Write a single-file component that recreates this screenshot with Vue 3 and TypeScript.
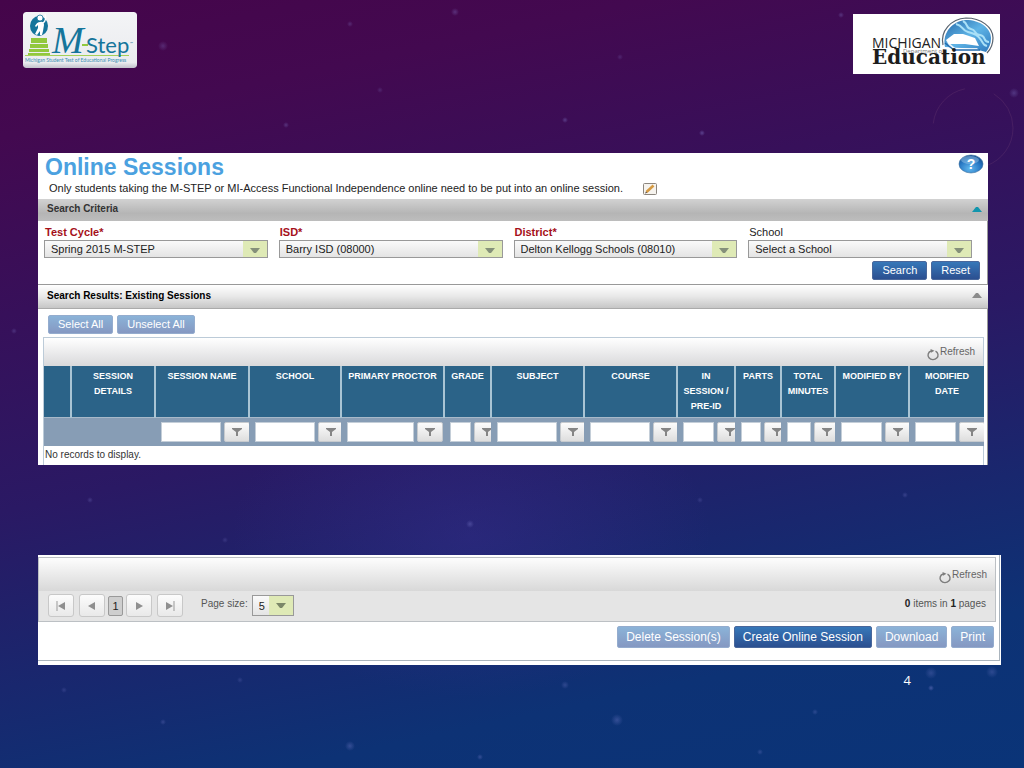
<script setup lang="ts">
import { ref } from 'vue'

interface Criterion {
  id: string
  label: string
  value: string
  required: boolean
}
interface Column {
  title: string
  width: number
  filter: number
}

const criteria: Criterion[] = [
  { id: 'cycle', label: 'Test Cycle', value: 'Spring 2015 M-STEP', required: true },
  { id: 'isd', label: 'ISD', value: 'Barry ISD (08000)', required: true },
  { id: 'district', label: 'District', value: 'Delton Kellogg Schools (08010)', required: true },
  { id: 'school', label: 'School', value: 'Select a School', required: false },
]

const columns: Column[] = [
  { title: '', width: 27, filter: 0 },
  { title: 'SESSION DETAILS', width: 84, filter: 0 },
  { title: 'SESSION NAME', width: 94, filter: 60 },
  { title: 'SCHOOL', width: 92, filter: 60 },
  { title: 'PRIMARY PROCTOR', width: 103, filter: 67 },
  { title: 'GRADE', width: 47, filter: 21 },
  { title: 'SUBJECT', width: 93, filter: 60 },
  { title: 'COURSE', width: 93, filter: 60 },
  { title: 'IN SESSION / PRE-ID', width: 58, filter: 31 },
  { title: 'PARTS', width: 46, filter: 20 },
  { title: 'TOTAL MINUTES', width: 54, filter: 24 },
  { title: 'MODIFIED BY', width: 74, filter: 41 },
  { title: 'MODIFIED DATE', width: 75, filter: 41 },
]

const pageSize = ref('5')

const stars = [
  [455, 12, 4, 0.3], [350, 24, 3, 0.25], [163, 46, 5, 0.25], [565, 120, 3, 0.35],
  [702, 133, 3, 0.4], [286, 125, 3, 0.3], [841, 15, 3, 0.3], [1014, 93, 5, 0.3],
  [380, 90, 3, 0.2], [620, 57, 3, 0.2], [90, 500, 3, 0.25], [470, 524, 4, 0.3],
  [700, 500, 3, 0.2], [905, 495, 3, 0.25], [225, 540, 3, 0.2], [14, 331, 3, 0.25],
  [931, 673, 6, 0.25], [931, 688, 3, 0.4], [992, 672, 6, 0.25], [617, 720, 6, 0.3],
  [565, 685, 4, 0.25], [350, 746, 5, 0.3], [163, 722, 3, 0.25], [815, 712, 3, 0.25],
  [64, 690, 3, 0.2], [480, 757, 3, 0.3], [760, 752, 3, 0.25], [240, 680, 3, 0.2],
]
</script>

<template>
  <main class="slide">
    <svg class="sky" viewBox="0 0 1024 768" preserveAspectRatio="xMidYMid slice" aria-hidden="true">
      <defs>
        <radialGradient id="star">
          <stop offset="0" stop-color="#8f8fe0" />
          <stop offset="1" stop-color="#8f8fe0" stop-opacity="0" />
        </radialGradient>
      </defs>
      <circle v-for="(s, i) in stars" :key="i" :cx="s[0]" :cy="s[1]" :r="s[2]" fill="url(#star)" :opacity="s[3]" />
      <circle cx="973" cy="128" r="40" fill="none" stroke="#a06a8a" stroke-opacity=".16" stroke-dasharray="50 30 90 81" stroke-dashoffset="-130" />
    </svg>

    <header class="logos">
      <svg class="mstep" viewBox="0 0 114 56" role="img" aria-label="M-Step">
        <defs>
          <linearGradient id="plate" x1="0" y1="0" x2="0" y2="1">
            <stop offset="0" stop-color="#f3f4f6" />
            <stop offset=".9" stop-color="#ebecef" />
            <stop offset="1" stop-color="#c2c2cc" />
          </linearGradient>
        </defs>
        <rect width="114" height="56" rx="3" fill="url(#plate)" />
        <ellipse cx="16" cy="14" rx="9" ry="10" fill="#15759b" />
        <circle cx="17" cy="6" r="3" fill="#fff" stroke="#15759b" stroke-width=".8" />
        <path d="M12 14q2-4 5-4 4-1 4 3l-1 6-1 4h-2v-4l-3 4-2-1 3-6v-3l-2 2z" fill="#fff" />
        <path d="M20 11q4-3 2-9" fill="none" stroke="#fff" stroke-width="1.400" />
        <path d="M8 26h16v5H8zM7 32h18v4H7zM6 37h20v3H6zM5 41h22v2H5z" fill="#92c83e" />
        <path d="M2 43.500h104" stroke="#a5d058" />
        <path d="M59 33h6" stroke="#92c83e" stroke-width="2" />
        <text x="29" y="41" class="mstep-m">M</text>
        <text x="63" y="41" class="mstep-step">Step</text>
        <text x="107" y="33" class="mstep-tm">™</text>
        <text x="2" y="50" class="mstep-caption">Michigan Student Test of Educational Progress</text>
      </svg>

      <svg class="mde" viewBox="0 0 147 60" role="img" aria-label="Michigan Department of Education">
        <defs>
          <linearGradient id="water" x1="0" y1="0" x2="1" y2="1">
            <stop offset="0" stop-color="#2567a8" />
            <stop offset=".5" stop-color="#5fb4e6" />
            <stop offset="1" stop-color="#2d79bd" />
          </linearGradient>
        </defs>
        <rect width="147" height="60" fill="#fff" />
        <path d="M90 31C87 17 98 5 113 4c15 0 27 9 27 20 0 6-2 11-6 15" fill="none" stroke="#59636e" stroke-width="1.200" />
        <path d="M92 33C89 18 100 7 113 6c14 0 25 8 25 18 0 6-2 10-5 14-12-4-26-4-41-5z" fill="url(#water)" />
        <path d="M110 7c6 3 2 7 8 8s2 5 9 6 2 7 9 7M103 10c8 2 5 6 12 8s10 3 13 8 3 5 6 6" fill="none" stroke="#a9e0f7" stroke-width="2" />
        <path d="M93 26l8-6 9 0 12 4 4 8-14-2-16 0z" fill="#fff" />
        <path d="M93 26l9 8h22l3 3H99z" fill="#fff" opacity=".85" />
        <path d="M92 29l9 7h26" fill="none" stroke="#236bad" stroke-width="1.500" />
        <text x="19" y="34" class="mde-state">MICHIGAN</text>
        <text x="50" y="39" class="mde-dept">Department of</text>
        <text x="19" y="50" class="mde-name">Education</text>
      </svg>
    </header>

    <section class="panel sessions">
      <div class="heading">
        <h1>Online Sessions</h1>
        <button class="help" type="button" aria-label="Help">
          <svg viewBox="0 0 26 20" width="26" height="20">
            <defs>
              <radialGradient id="ball" cx=".45" cy=".75" r=".75">
                <stop offset="0" stop-color="#62b8ee" />
                <stop offset=".6" stop-color="#2878c4" />
                <stop offset="1" stop-color="#124d8e" />
              </radialGradient>
            </defs>
            <ellipse cx="13" cy="10" rx="12" ry="9" fill="url(#ball)" stroke="#3a6f9d" stroke-width=".6" />
            <ellipse cx="12" cy="6" rx="9" ry="4" fill="#b4dcf6" opacity=".4" />
            <text x="13" y="15" text-anchor="middle" class="help-mark">?</text>
          </svg>
        </button>
      </div>
      <p class="intro">
        <span>Only students taking the M-STEP or MI-Access Functional Independence online need to be put into an online session.</span>
        <button class="edit" type="button" aria-label="Edit">
          <svg viewBox="0 0 14 12" width="14" height="12">
            <rect x=".5" y=".5" width="13" height="11" rx="1" fill="#f6f3ee" stroke="#8c867f" />
            <path d="M3.500 9L10.500 2.500" stroke="#d59a43" stroke-width="2.600" />
            <path d="M2 10.500l1-2 1.200 1.200z" fill="#4d4035" />
          </svg>
        </button>
      </p>

      <h2 class="bar dark">
        Search Criteria
        <svg viewBox="0 0 10 5" width="10" height="5"><path d="M0 5L4 0h2l4 5z" fill="#1195ad" /></svg>
      </h2>

      <form class="criteria" @submit.prevent>
        <div class="fields">
          <div v-for="c in criteria" :key="c.id" class="field">
            <label :for="c.id" :class="{ required: c.required }">{{ c.label }}<template v-if="c.required">*</template></label>
            <span class="combo">
              <select :id="c.id"><option>{{ c.value }}</option></select>
              <svg viewBox="0 0 10 5" width="10" height="5"><path d="M0 0h10L6 5H4z" fill="#85907a" /></svg>
            </span>
          </div>
        </div>
        <div class="actions">
          <button class="btn" type="submit">Search</button>
          <button class="btn" type="reset">Reset</button>
        </div>
      </form>

      <h2 class="bar light">
        Search Results: Existing Sessions
        <svg viewBox="0 0 10 5" width="10" height="5"><path d="M0 5L4 0h2l4 5z" fill="#8b8b8b" /></svg>
      </h2>

      <div class="results">
        <div class="selection">
          <button class="btn muted" type="button">Select All</button>
          <button class="btn muted" type="button">Unselect All</button>
        </div>
        <div class="grid">
          <div class="toolbar">
            <button class="refresh" type="button">
              <svg viewBox="0 0 14 13" width="14" height="13">
                <path d="M9.500 3.200A5 4.500 0 1 1 5 3" fill="none" stroke="#7d7d7d" stroke-width="1.400" />
                <path d="M4.500 1l4 1.800-3.500 2z" fill="#7d7d7d" />
              </svg>
              <span>Refresh</span>
            </button>
          </div>
          <table>
            <colgroup>
              <col v-for="(c, i) in columns" :key="i" :style="{ width: c.width + 'px' }" />
            </colgroup>
            <thead>
              <tr class="titles">
                <th v-for="(c, i) in columns" :key="i" scope="col">{{ c.title }}</th>
              </tr>
              <tr class="filters">
                <td v-for="(c, i) in columns" :key="i">
                  <div v-if="c.filter" class="filter">
                    <input type="text" :aria-label="'Filter ' + c.title" :style="{ width: c.filter + 'px' }" />
                    <button type="button" :aria-label="'Filter options ' + c.title">
                      <svg viewBox="0 0 10 8" width="10" height="8"><path d="M0 0h10v1L6 4v4H4V4L0 1z" fill="#858585" /></svg>
                    </button>
                  </div>
                </td>
              </tr>
            </thead>
            <tbody>
              <tr>
                <td class="empty" :colspan="columns.length">No records to display.</td>
              </tr>
            </tbody>
          </table>
        </div>
      </div>
    </section>

    <section class="panel footer">
      <div class="frame">
        <div class="pager-box">
          <div class="toolbar tall">
            <button class="refresh" type="button">
              <svg viewBox="0 0 14 13" width="14" height="13">
                <path d="M9.500 3.200A5 4.500 0 1 1 5 3" fill="none" stroke="#7d7d7d" stroke-width="1.400" />
                <path d="M4.500 1l4 1.800-3.500 2z" fill="#7d7d7d" />
              </svg>
              <span>Refresh</span>
            </button>
          </div>
          <nav class="pager" aria-label="Pages">
            <button class="step" type="button" aria-label="First page">
              <svg viewBox="0 0 10 10" width="10" height="10"><path d="M1 0v10" stroke="#999" /><path d="M9 1v8L2 5z" fill="#8f8f8f" /></svg>
            </button>
            <button class="step" type="button" aria-label="Previous page">
              <svg viewBox="0 0 10 10" width="10" height="10"><path d="M8 1v8L1 5z" fill="#8f8f8f" /></svg>
            </button>
            <button class="current" type="button">1</button>
            <button class="step" type="button" aria-label="Next page">
              <svg viewBox="0 0 10 10" width="10" height="10"><path d="M2 1v8l7-4z" fill="#8f8f8f" /></svg>
            </button>
            <button class="step" type="button" aria-label="Last page">
              <svg viewBox="0 0 10 10" width="10" height="10"><path d="M9 0v10" stroke="#999" /><path d="M1 1v8l7-4z" fill="#8f8f8f" /></svg>
            </button>
            <label for="page-size">Page size:</label>
            <span class="combo size">
              <select id="page-size" v-model="pageSize"><option>5</option><option>10</option></select>
              <svg viewBox="0 0 10 5" width="10" height="5"><path d="M0 0h10L6 5H4z" fill="#7b8768" /></svg>
            </span>
            <span class="count"><b>0</b> items in <b>1</b> pages</span>
          </nav>
        </div>
        <div class="commands">
          <button class="btn big muted" type="button">Delete Session(s)</button>
          <button class="btn big" type="button">Create Online Session</button>
          <button class="btn big muted" type="button">Download</button>
          <button class="btn big muted" type="button">Print</button>
        </div>
      </div>
    </section>

    <footer class="number">4</footer>
  </main>
</template>

<style>
html,
body {
  margin: 0;
  background: #0b3377;
}
</style>

<style scoped>
.slide {
  position: relative;
  box-sizing: border-box;
  min-height: 100vh;
  overflow: hidden;
  font-family: "Liberation Sans", Arial, sans-serif;
  background:
    radial-gradient(ellipse 240px 160px at 46% 70%, rgba(62, 48, 150, 0.35), transparent),
    linear-gradient(168deg, #45054a 0%, #430950 14%, #37105a 32%, #2a1964 52%, #19276e 70%, #0d3275 84%, #0a3478 100%);
}
.slide * {
  box-sizing: border-box;
}
.sky {
  position: absolute;
  inset: 0;
  width: 100%;
  height: 100%;
}
.logos,
.panel,
.number {
  position: relative;
}
.logos {
  display: flex;
  justify-content: space-between;
  align-items: flex-start;
  height: 153px;
  padding: 12px 24px 0 23px;
}
.mstep {
  width: 114px;
  height: 56px;
  border-radius: 3px;
}
.mde {
  width: 147px;
  height: 60px;
  margin-top: 2px;
}
.mstep-m {
  font: italic 38px "Liberation Serif", serif;
  fill: #15759b;
}
.mstep-step {
  font: 22px Lato, sans-serif;
  fill: #15759b;
}
.mstep-tm {
  font: 4px Lato, sans-serif;
  fill: #15759b;
}
.mstep-caption {
  font: 5px Lato, sans-serif;
  fill: #3a8db2;
}
.mde-state {
  font: 14px "Open Sans", sans-serif;
  fill: #222;
}
.mde-dept {
  font: 6px "Open Sans", sans-serif;
  fill: #777;
}
.mde-name {
  font: bold 20px "DejaVu Serif", serif;
  fill: #1d1d1d;
}
.panel {
  background: #fff;
  overflow: hidden;
}
.sessions {
  margin: 0 36px 0 38px;
}
button {
  font-family: inherit;
  cursor: pointer;
}
.heading {
  display: flex;
  justify-content: space-between;
  height: 27px;
  padding: 1px 4px 0 7px;
}
h1 {
  margin: 0;
  font-size: 23px;
  line-height: 27px;
  color: #4ba1e0;
}
.help,
.edit {
  display: flex;
  padding: 0;
  border: 0;
  background: none;
}
.help-mark {
  font: bold 14px "Liberation Sans", sans-serif;
  fill: #fff;
}
.intro {
  display: flex;
  align-items: center;
  gap: 20px;
  height: 19px;
  margin: 0;
  padding: 0 11px 3px;
  font-size: 11px;
  white-space: nowrap;
  color: #222;
}
.edit {
  margin-top: 2px;
}
.bar {
  display: flex;
  justify-content: space-between;
  align-items: center;
  margin: 0;
  padding: 0 6px 2px 9px;
  font-size: 10px;
  line-height: 12px;
}
.dark {
  height: 22px;
  color: #333;
  background: linear-gradient(#d2d2d2, #b5b5b5 65%, #bdbdbd);
}
.light {
  height: 24px;
  color: #000;
  background: linear-gradient(#fff, #e8e8e8 50%, #c6c6c6);
  border-bottom: 1px solid #aaa;
}
.criteria {
  height: 64px;
  padding: 4px 0 0 6px;
  border-right: 1px solid #999;
  border-bottom: 1px solid #999;
}
.fields {
  display: grid;
  grid-template-columns: repeat(4, 1fr);
  gap: 11px;
  padding-right: 15px;
}
.field {
  display: flex;
  flex-direction: column;
}
.field label {
  padding: 0 0 1px 1px;
  font-size: 11px;
  line-height: 14px;
  color: #222;
}
.field .required {
  font-weight: bold;
  color: #a5101a;
}
.combo {
  position: relative;
  display: flex;
}
.combo select {
  appearance: none;
  width: 100%;
  height: 18px;
  margin: 0;
  padding: 0 30px 0 6px;
  border: 1px solid #999;
  border-radius: 0;
  font: 11px "Liberation Sans", sans-serif;
  color: #222;
  background:
    linear-gradient(#dfeab6, #dfeab6) right / 24px 100% no-repeat,
    linear-gradient(#fafafa, #e4e4e4);
}
.combo svg {
  position: absolute;
  right: 8px;
  top: 8px;
  pointer-events: none;
}
.actions {
  display: flex;
  justify-content: flex-end;
  gap: 4px;
  padding: 3px 7px 0 0;
}
.btn {
  height: 19px;
  padding: 0 9px;
  border: 1px solid #49679b;
  border-radius: 2px;
  font-size: 11px;
  line-height: 17px;
  white-space: nowrap;
  color: #fff;
  background: linear-gradient(#3778b9, #2b4f90);
}
.muted {
  border-color: #94acce;
  background: linear-gradient(#8bb3d8, #8598c2);
}
.results {
  padding: 6px 3px 0 5px;
  border-right: 1px solid #999;
}
.selection {
  display: flex;
  gap: 4px;
  padding: 0 5px 3px;
}
.grid {
  border: 1px solid #bccbd8;
  border-bottom: 0;
}
.toolbar {
  display: flex;
  justify-content: flex-end;
  height: 28px;
  padding: 7px 8px 0 0;
  background: linear-gradient(#fff, #d9d9db);
}
.refresh {
  display: flex;
  align-items: flex-start;
  height: 16px;
  padding: 0;
  border: 0;
  font-size: 10px;
  line-height: 13px;
  color: #666;
  background: none;
}
.refresh svg {
  margin-top: 3px;
}
table {
  width: 100%;
  table-layout: fixed;
  border-collapse: collapse;
}
th,
td {
  padding: 0;
}
.titles th {
  height: 51px;
  padding: 3px 4px;
  border-left: 2px solid #a9c4d4;
  vertical-align: top;
  font-size: 9px;
  line-height: 15px;
  color: #fff;
  background: #2b6388;
}
.titles th:first-child {
  border-left: 0;
}
.filters td {
  height: 28px;
  border-top: 1px solid #a8b9c9;
  background: #879db5;
}
.filter {
  display: flex;
  gap: 3px;
  padding-left: 6px;
  overflow: hidden;
}
.filter input {
  flex: none;
  height: 20px;
  padding: 0 2px;
  border: 1px solid #c4ced8;
  font: 10px "Liberation Sans", sans-serif;
  background: #fff;
}
.filter button {
  display: flex;
  flex: none;
  justify-content: center;
  align-items: center;
  width: 26px;
  height: 20px;
  padding: 0;
  border: 1px solid #c6cace;
  border-radius: 2px;
  background: linear-gradient(#fcfcfc, #dedede);
}
.empty {
  height: 19px;
  padding: 1px 1px 2px;
  font-size: 10px;
  line-height: 14px;
  color: #333;
}
.footer {
  margin: 90px 23px 0 38px;
  padding: 0 1px 4px 0;
}
.frame {
  padding: 2px 3px 0 0;
  border-right: 1px solid #aab4bd;
  border-bottom: 1px solid #aab4bd;
}
.pager-box {
  border: 1px solid #bcc0c4;
}
.tall {
  height: 33px;
  padding: 10px 8px 0 0;
  background: linear-gradient(#fdfdfd, #d8d8d8);
}
.pager {
  display: flex;
  align-items: center;
  height: 30px;
  padding: 0 9px;
  background: #e5e5e5;
  font-size: 10px;
  color: #555;
}
.step {
  display: flex;
  justify-content: center;
  align-items: center;
  width: 26px;
  height: 23px;
  padding: 0;
  border: 1px solid #c8c8c8;
  border-radius: 3px;
  background: linear-gradient(#fcfcfc, #e9e9e9);
}
.step + .step {
  margin-left: 5px;
}
.current {
  width: 15px;
  height: 20px;
  margin: 0 3px;
  padding: 0;
  border: 1px solid #999;
  border-radius: 2px;
  font-size: 11px;
  color: #222;
  background: #cecece;
}
.pager label {
  margin: 0 4px 4px 18px;
}
.size {
  width: 42px;
}
.size select {
  height: 21px;
  padding: 0 26px 0 6px;
}
.count {
  margin: 0 0 4px auto;
}
.count b {
  color: #222;
}
.commands {
  display: flex;
  justify-content: flex-end;
  gap: 4px;
  padding: 4px 2px 12px 0;
}
.big {
  height: 22px;
  padding: 0 8px;
  font-size: 12px;
  line-height: 20px;
}
.number {
  padding: 7px 113px 0 0;
  text-align: right;
  font: 13px/16px "Open Sans", sans-serif;
  color: #fff;
}
</style>
